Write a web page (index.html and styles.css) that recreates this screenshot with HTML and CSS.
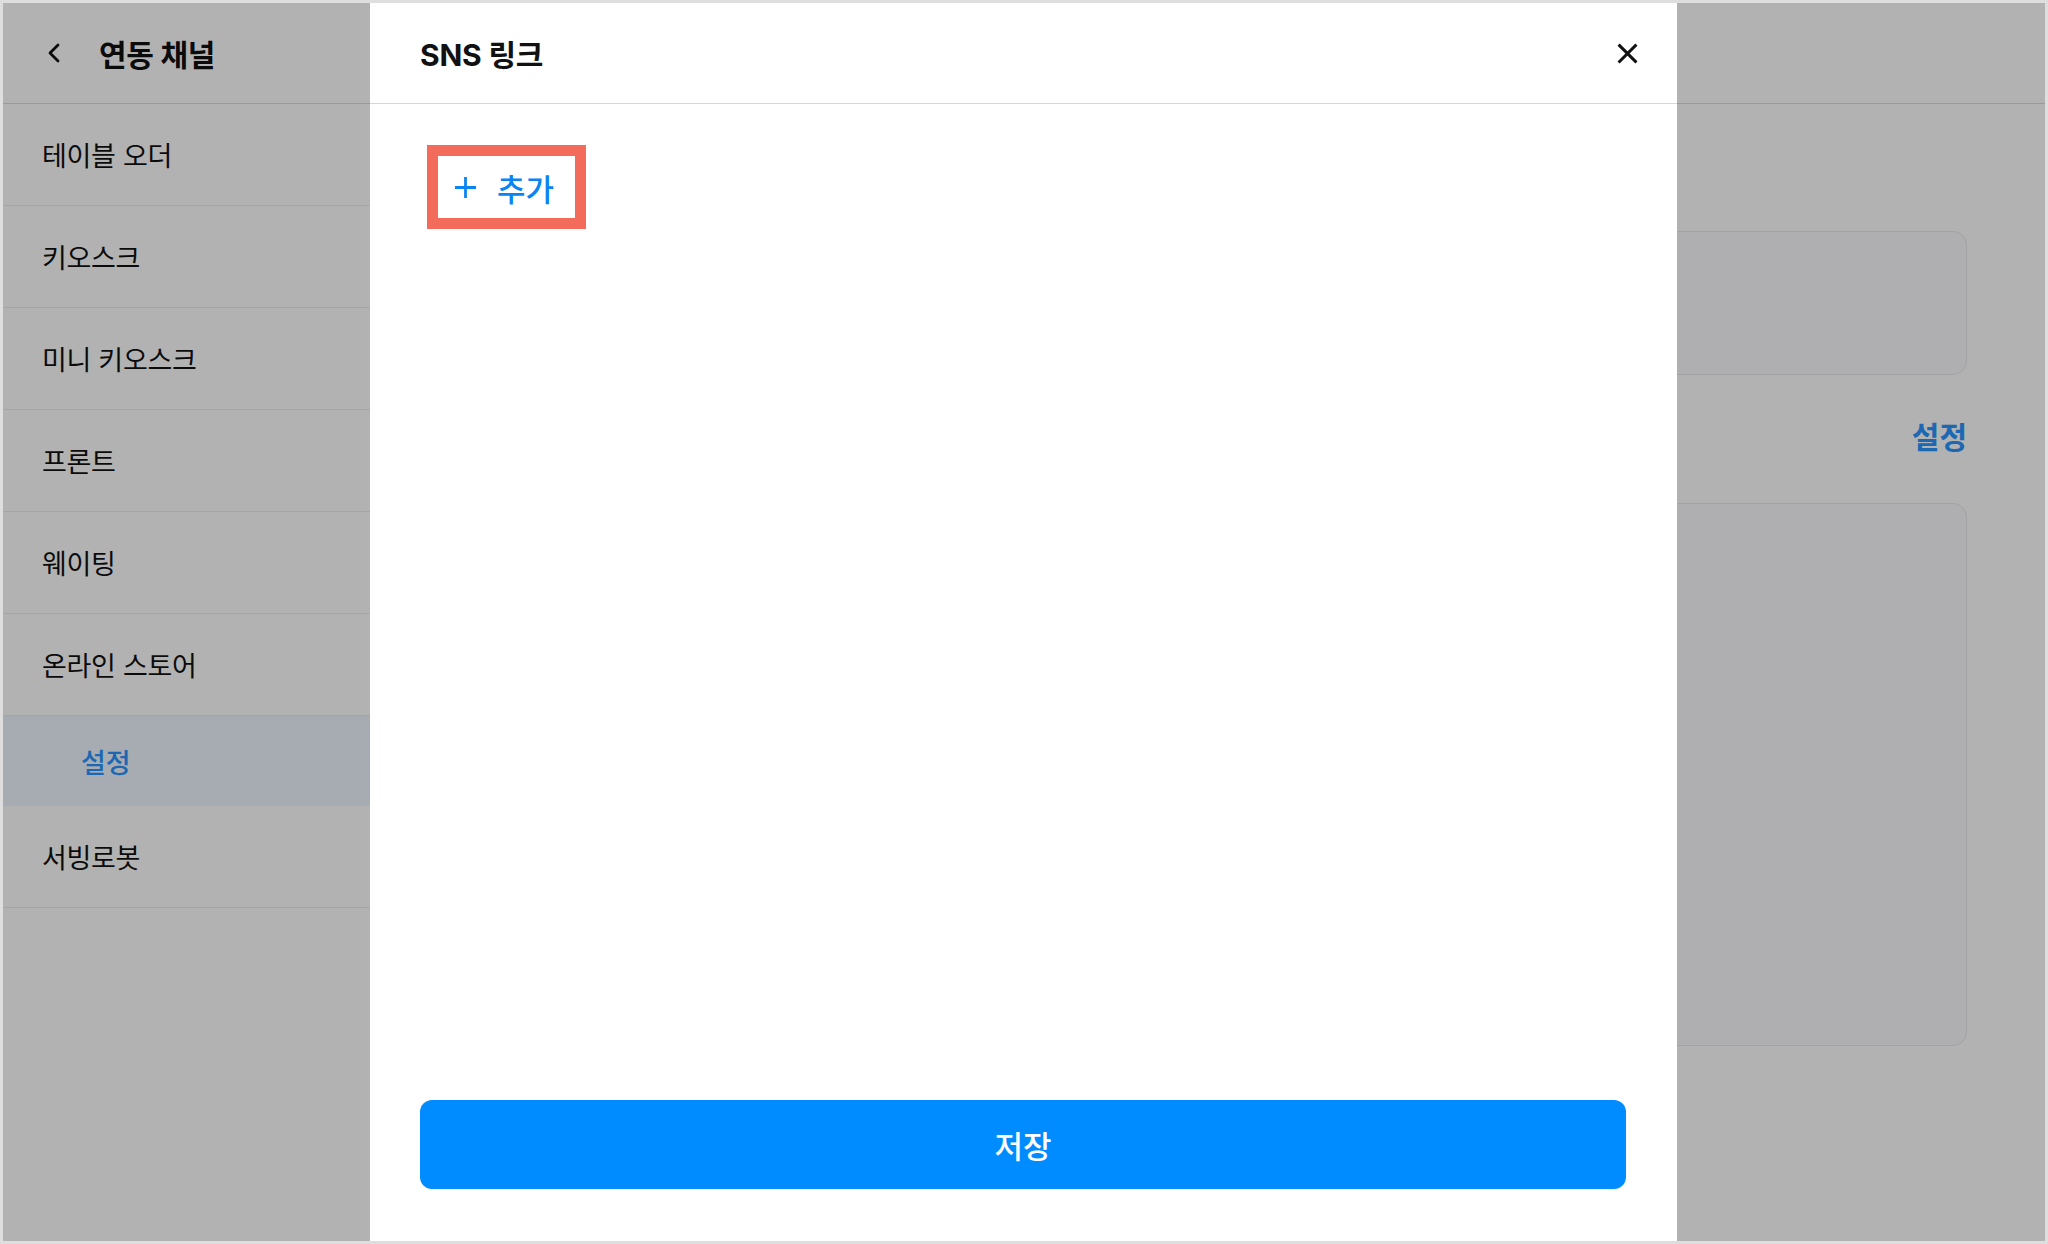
FILE: index.html
```html
<!DOCTYPE html>
<html lang="ko">
<head>
<meta charset="utf-8">
<title>SNS 링크</title>
<link rel="stylesheet" href="styles.css">
</head>
<body>
<div class="screen">
  <aside class="sidebar">
    <div class="side-head">
      <svg class="back" width="14" height="20" viewBox="0 0 14 20"><path d="M11 2 L3 10 L11 18" fill="none" stroke="#111" stroke-width="2.8" stroke-linecap="round" stroke-linejoin="round"/></svg>
      <span class="side-title">연동 채널</span>
    </div>
    <nav class="menu">
      <div class="item">테이블 오더</div>
      <div class="item">키오스크</div>
      <div class="item">미니 키오스크</div>
      <div class="item">프론트</div>
      <div class="item">웨이팅</div>
      <div class="item">온라인 스토어</div>
      <div class="sub active">설정</div>
      <div class="item">서빙로봇</div>
    </nav>
  </aside>
  <main class="main">
    <div class="main-head"></div>
    <div class="content">
      <div class="sec-head first"></div>
      <div class="card card-sm"></div>
      <div class="sec-head second"><a class="link">설정</a></div>
      <div class="card card-lg"></div>
    </div>
  </main>
  <div class="overlay"></div>
  <section class="modal">
    <header class="modal-head">
      <h1 class="modal-title">SNS 링크</h1>
      <button class="close" aria-label="닫기">
        <svg width="24" height="24" viewBox="0 0 24 24"><path d="M3 3 L21 21 M21 3 L3 21" stroke="#111" stroke-width="3.4" stroke-linecap="square"/></svg>
      </button>
    </header>
    <div class="modal-body">
      <button class="add">
        <svg width="24" height="24" viewBox="0 0 24 24"><path d="M12 1 V23 M1 12 H23" stroke="#0a84f0" stroke-width="2.9"/></svg>
        <span>추가</span>
      </button>
    </div>
    <footer class="modal-foot">
      <button class="save">저장</button>
    </footer>
  </section>
</div>
</body>
</html>
```
FILE: styles.css
```css
* { box-sizing: border-box; }
html, body { margin: 0; padding: 0; }
body {
  background: #dedede;
  padding: 3px;
  font-family: "Inter", "Noto Sans CJK KR", sans-serif;
  color: #111;
}
.screen {
  position: relative;
  width: 2042px;
  height: 1238px;
  background: #fff;
  display: grid;
  grid-template-columns: 367px 1fr;
  overflow: hidden;
}
.sidebar { display: flex; flex-direction: column; }
.side-head {
  height: 101px;
  border-bottom: 1px solid #dbdbdb;
  display: flex;
  align-items: center;
  padding-left: 44px;
}
.back { margin-right: 38px; }
.side-title { font-size: 30px; font-weight: 700; color: #111; letter-spacing: -0.3px; }
.menu { display: flex; flex-direction: column; }
.item {
  height: 102px;
  border-bottom: 1px solid #eeeeee;
  display: flex;
  align-items: center;
  padding-left: 39px;
  font-size: 27px;
  color: #111;
  letter-spacing: -0.3px;
}
.sub {
  height: 90px;
  display: flex;
  align-items: center;
  padding-left: 78px;
  font-size: 27px;
  font-weight: 500;
}
.sub.active { background: #eef6ff; color: #2a95ff; }

.main { display: flex; flex-direction: column; }
.main-head { height: 101px; border-bottom: 1px solid #dbdbdb; }
.content { padding: 0 78px 0 40px; display: flex; flex-direction: column; }
.sec-head.first { height: 127px; }
.sec-head.second {
  height: 128px;
  padding-top: 45px;
  display: flex;
  justify-content: flex-end;
}
.link { font-size: 30px; font-weight: 700; color: #2a95ff; line-height: 34px; height: 34px; }
.card {
  background: #fbfbfe;
  border: 1px solid #e8e8ea;
  border-radius: 14px;
}
.card-sm { height: 144px; }
.card-lg { height: 543px; }

.overlay {
  position: absolute;
  inset: 0;
  background: rgba(0, 0, 0, 0.3);
  z-index: 1;
}
.modal {
  position: absolute;
  top: 0;
  bottom: 0;
  left: 367px;
  width: 1307px;
  background: #fff;
  z-index: 2;
  display: flex;
  flex-direction: column;
}
.modal-head {
  height: 101px;
  border-bottom: 1px solid #d6d6d6;
  display: flex;
  align-items: center;
  justify-content: space-between;
  padding: 0 38px 0 50px;
}
.modal-title { margin: 0; font-size: 30px; font-weight: 700; color: #111; letter-spacing: -0.2px; }
.close {
  border: 0; background: none; padding: 0; width: 24px; height: 24px;
  display: flex; align-items: center; justify-content: center;
}
.close svg { width: 21px; height: 21px; }
.modal-body { flex: 1; padding: 41px 50px 0 57px; }
.add {
  display: inline-flex;
  align-items: center;
  height: 84px;
  border: 11px solid #f36c5b;
  background: #fff;
  padding: 0 21px 0 16px;
  font-family: "Noto Sans CJK KR", sans-serif;
  font-size: 31px;
  font-weight: 500;
  color: #0a84f0;
}
.add svg { width: 23px; height: 23px; margin-right: 20px; }
.modal-foot { padding: 0 51px 52px 50px; }
.save {
  width: 100%;
  height: 89px;
  border: 0;
  border-radius: 12px;
  background: #008cff;
  color: #fff;
  font-family: "Noto Sans CJK KR", sans-serif;
  font-size: 31px;
  font-weight: 500;
}
```
